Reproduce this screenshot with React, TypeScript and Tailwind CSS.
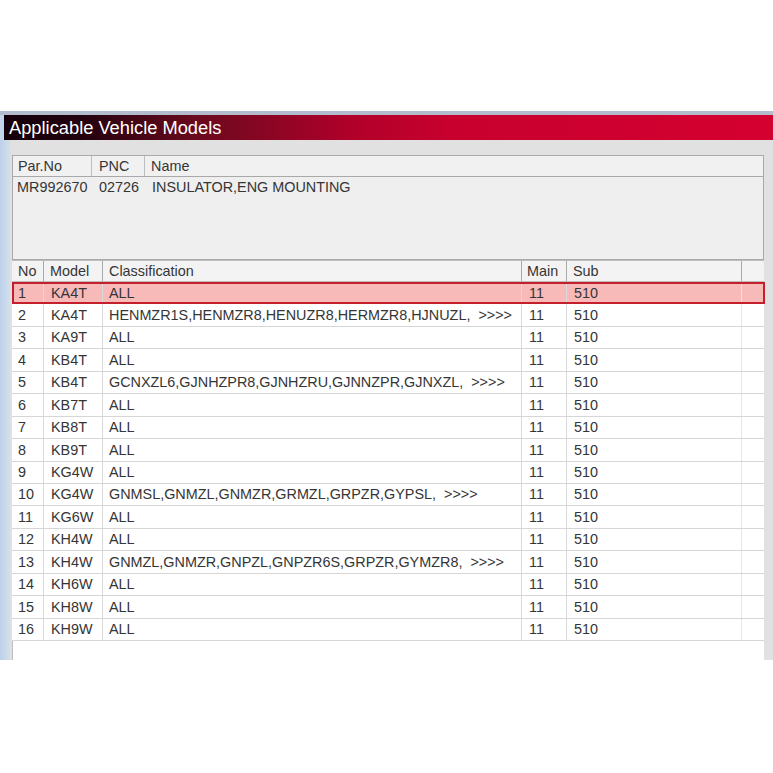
import React from "react";

type Row = { no: number; model: string; cls: string; main: string; sub: string };

const rows: Row[] = [
  { no: 1, model: "KA4T", cls: "ALL", main: "11", sub: "510" },
  { no: 2, model: "KA4T", cls: "HENMZR1S,HENMZR8,HENUZR8,HERMZR8,HJNUZL,  >>>>", main: "11", sub: "510" },
  { no: 3, model: "KA9T", cls: "ALL", main: "11", sub: "510" },
  { no: 4, model: "KB4T", cls: "ALL", main: "11", sub: "510" },
  { no: 5, model: "KB4T", cls: "GCNXZL6,GJNHZPR8,GJNHZRU,GJNNZPR,GJNXZL,  >>>>", main: "11", sub: "510" },
  { no: 6, model: "KB7T", cls: "ALL", main: "11", sub: "510" },
  { no: 7, model: "KB8T", cls: "ALL", main: "11", sub: "510" },
  { no: 8, model: "KB9T", cls: "ALL", main: "11", sub: "510" },
  { no: 9, model: "KG4W", cls: "ALL", main: "11", sub: "510" },
  { no: 10, model: "KG4W", cls: "GNMSL,GNMZL,GNMZR,GRMZL,GRPZR,GYPSL,  >>>>", main: "11", sub: "510" },
  { no: 11, model: "KG6W", cls: "ALL", main: "11", sub: "510" },
  { no: 12, model: "KH4W", cls: "ALL", main: "11", sub: "510" },
  { no: 13, model: "KH4W", cls: "GNMZL,GNMZR,GNPZL,GNPZR6S,GRPZR,GYMZR8,  >>>>", main: "11", sub: "510" },
  { no: 14, model: "KH6W", cls: "ALL", main: "11", sub: "510" },
  { no: 15, model: "KH8W", cls: "ALL", main: "11", sub: "510" },
  { no: 16, model: "KH9W", cls: "ALL", main: "11", sub: "510" },
];

const font = { fontFamily: '"Liberation Sans", Arial, sans-serif' };

function DataRow({ r }: { r: Row }) {
  const selected = r.no === 1;
  return (
    <div
      className={
        "relative flex h-[22.44px] items-center text-[14.4px] leading-none text-[#353535] " +
        (selected ? "bg-[#f8b9b9]" : "bg-white border-b border-[#d6d6d6]")
      }
    >
      <div className="flex h-full w-[32px] items-center border-r border-[#dadada] pl-[6px]">{r.no}</div>
      <div className="flex h-full w-[59px] items-center border-r border-[#dadada] pl-[7px]">{r.model}</div>
      <div className="flex h-full w-[419px] items-center border-r border-[#dadada] pl-[6px] whitespace-pre">{r.cls}</div>
      <div className="flex h-full w-[45px] items-center border-r border-[#dadada] pl-[7px]">{r.main}</div>
      <div className="flex h-full w-[175px] items-center border-r border-[#e6e6e6] pl-[7px]">{r.sub}</div>
      <div className="h-full flex-1" />
      {selected && (
        <div className="pointer-events-none absolute inset-y-0 left-0 right-[-1px] border-2 border-[#c4202c]" />
      )}
    </div>
  );
}

export default function App() {
  return (
    <div className="h-[773px] w-[773px] overflow-hidden bg-white" style={font}>
      <div className="h-[111px]" />
      {/* window frame top edge */}
      <div className="h-[4px] bg-[#b3bccd]" />
      <div className="flex">
        <div className="w-[4px] bg-[#c2d5eb]" />
        <div
          className="flex h-[25px] flex-1 items-center pl-[5px] text-[18.3px] text-white"
          style={{
            background:
              "linear-gradient(90deg, #14000a 0%, #22020e 10%, #6a0a1e 25%, #b0002a 45%, #c8002e 58%, #d40030 100%)",
          }}
        >
          Applicable Vehicle Models
        </div>
      </div>
      <div className="flex h-[520px]">
        <div className="w-[10px] bg-gradient-to-r from-[#bcd1ea] to-[#d3dfec]" />
        <div className="w-[2px] bg-[#e0e0e0]" />
        <div className="flex flex-1 flex-col bg-[#e1e1e1] pt-[15px]">
          {/* part header box */}
          <div className="mr-[9px] flex h-[105px] flex-col border border-[#a9a9a9] bg-[#efefef] text-[14.4px] text-[#353535]">
            <div className="flex h-[21px] items-center border-b border-[#a9a9a9] bg-[#f1f1f1] leading-none">
              <div className="flex h-full w-[79px] items-center border-r border-[#bdbdbd] pl-[5px]">Par.No</div>
              <div className="flex h-full w-[53px] items-center border-r border-[#bdbdbd] pl-[7px]">PNC</div>
              <div className="flex h-full flex-1 items-center pl-[6px]">Name</div>
            </div>
            <div className="flex h-[21px] items-center leading-none">
              <div className="w-[80px] pl-[4px]">MR992670</div>
              <div className="w-[53px] pl-[6px]">02726</div>
              <div className="flex-1 pl-[6px]">INSULATOR,ENG MOUNTING</div>
            </div>
          </div>
          {/* applicable models table */}
          <div className="flex flex-1">
            <div className="flex w-[752px] flex-col bg-white">
              <div className="flex h-[22px] items-center border-y border-[#bdbdbd] bg-[#f3f3f3] text-[14.4px] leading-none text-[#353535]">
                <div className="flex h-full w-[32px] items-center border-r border-[#a9a9a9] pl-[6px]">No</div>
                <div className="flex h-full w-[59px] items-center border-r border-[#a9a9a9] pl-[6px]">Model</div>
                <div className="flex h-full w-[419px] items-center border-r border-[#a9a9a9] pl-[6px]">Classification</div>
                <div className="flex h-full w-[45px] items-center border-r border-[#a9a9a9] pl-[5px]">Main</div>
                <div className="flex h-full w-[175px] items-center border-r border-[#a9a9a9] pl-[6px]">Sub</div>
                <div className="h-full flex-1" />
              </div>
              {rows.map((r) => (
                <DataRow key={r.no} r={r} />
              ))}
              <div className="flex-1 border-l border-[#bdbdbd]" />
            </div>
            <div className="flex-1 bg-[#e1e1e1]" />
          </div>
        </div>
      </div>
    </div>
  );
}
